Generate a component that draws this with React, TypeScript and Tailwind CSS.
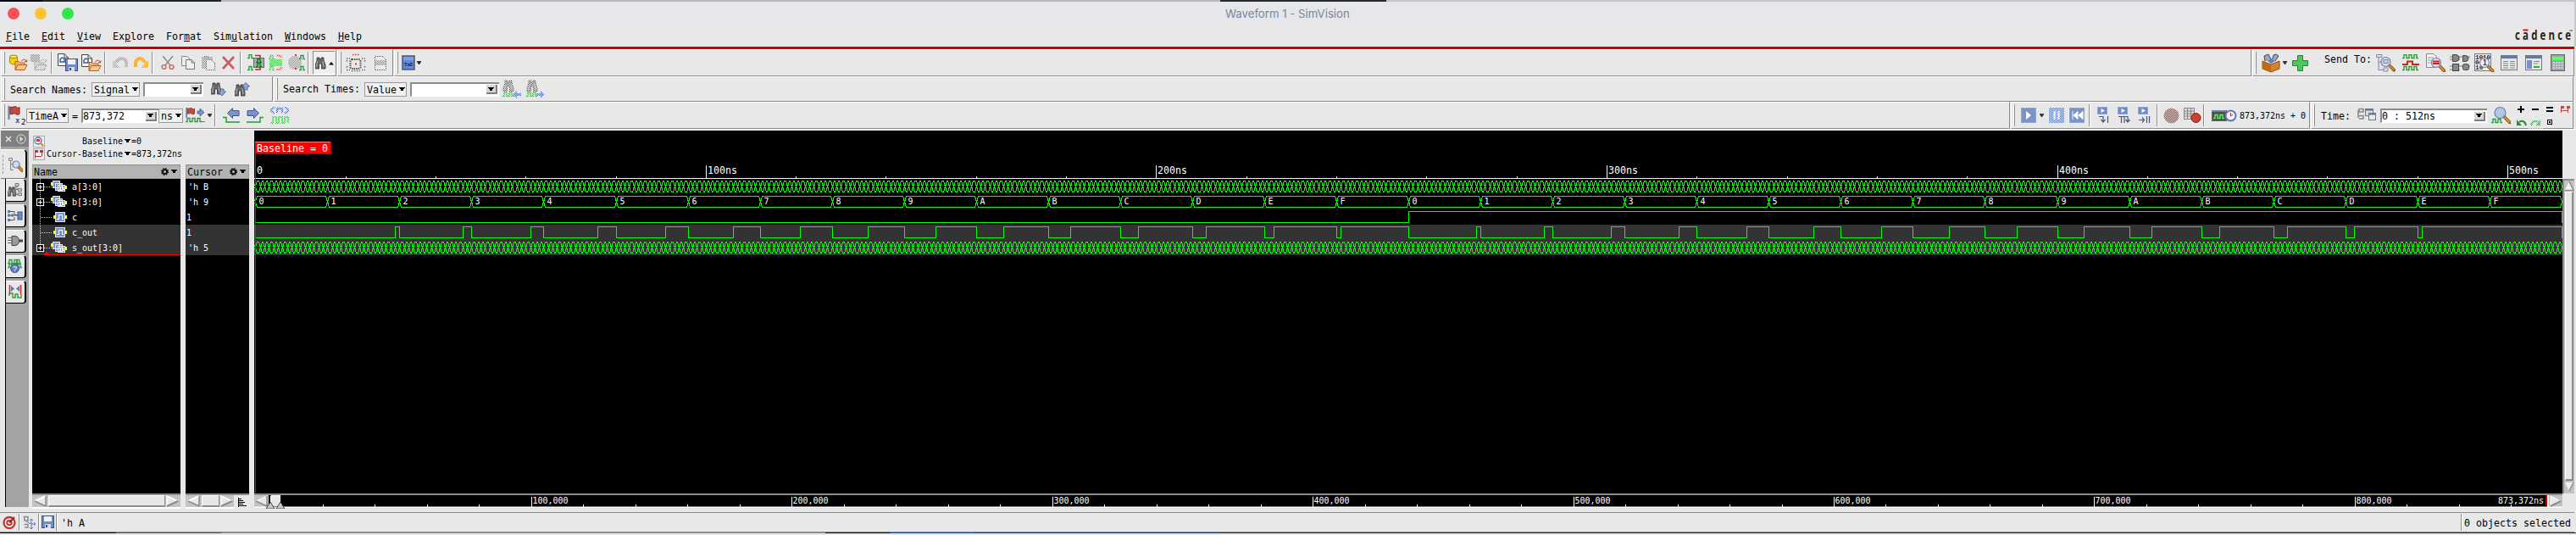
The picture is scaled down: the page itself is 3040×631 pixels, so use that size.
import React from "react";

const MONO = "font-['DejaVu_Sans_Mono','Liberation_Mono',monospace]";
const T7 = "pt-[2px] text-[11.63px] leading-[13px] whitespace-pre text-black";
const T7BOX = "text-[11.63px] leading-[13px] whitespace-pre text-black";
const T6 = "pt-px text-[9.97px] leading-[12px] whitespace-pre text-black";

type IconProps = { w: number; h: number; className?: string; dim?: boolean; children?: React.ReactNode };

function Icon({ w, h, className = "", dim, children }: IconProps) {
  return (
    <svg width={w} height={h} viewBox={`0 0 ${w} ${h}`} className={`shrink-0 block ${className}`}>
      {children}
      {dim && <rect width={w} height={h} fill="url(#chk)" shapeRendering="crispEdges" />}
    </svg>
  );
}

/* ---------- glyph fragments ---------- */
const Folder = ({ x = 0, y = 0 }: { x?: number; y?: number }) => (
  <g transform={`translate(${x} ${y})`}>
    <path d="M1 12V2.500H5L6.500 4H12V6" fill="#f3b36b" stroke="#b8601a" />
    <path d="M1 12.500L4 6.500H15L12 12.500Z" fill="#f9c88c" stroke="#b8601a" />
    <path d="M8 2.500C10 -0.500 13 -0.500 14 2M12 2.500L14.500 3L15 0.500" fill="none" stroke="#c03030" />
  </g>
);
const Page = () => (
  <g>
    <path d="M.500.500H8L12.500 5V14.500H.500Z" fill="#f4f4f4" stroke="#444" />
    <path d="M8 .500V5H12.500" fill="none" stroke="#444" />
    <path d="M3 10V7L5 5L8 6V10Z" fill="#fff" stroke="#3c5a96" strokeWidth="1.500" />
  </g>
);
const Floppy = ({ x = 0, y = 0 }: { x?: number; y?: number }) => (
  <g transform={`translate(${x} ${y})`}>
    <rect x=".5" y=".5" width="14" height="14" fill="#6f8cc8" stroke="#34508a" />
    <rect x="3" y="1" width="9" height="6" fill="#f2f2f2" />
    <rect x="4" y="10" width="7" height="5" fill="#dcdcdc" />
    <rect x="5" y="11" width="2" height="3" fill="#34508a" />
  </g>
);
const Bino = () => (
  <g>
    <path d="M2 1H5V3H7V1H10V4L12 10V14H7.500V8H4.500V14H0V10L2 4Z" fill="#6a6a6a" stroke="#333" strokeWidth=".8" />
    <path d="M2.500 5L1.500 12M9 5L10 12" stroke="#b5b5b5" />
  </g>
);
const Wave = ({ x = 0, y = 0, c = "#2f9a3c", n = 3 }: { x?: number; y?: number; c?: string; n?: number }) => {
  let d = `M0 4.500`;
  for (let i = 0; i < n; i++) d += `h2v-4h3v4h1`;
  d += "h1";
  return <path transform={`translate(${x} ${y})`} d={d} fill="none" stroke={c} strokeWidth="1.400" />;
};
const Lens = ({ x, y, r = 5.5, fill = "#c9dbf3" }: { x: number; y: number; r?: number; fill?: string }) => (
  <g>
    <path d={`M${x + r * 0.7} ${y + r * 0.7}L${x + r * 1.75} ${y + r * 1.75}`} stroke="#7a4a10" strokeWidth="3.600" strokeLinecap="round" />
    <path d={`M${x + r * 0.75} ${y + r * 0.75}L${x + r * 1.7} ${y + r * 1.7}`} stroke="#e0952c" strokeWidth="2" strokeLinecap="round" />
    <circle cx={x} cy={y} r={r} fill={fill} fillOpacity=".85" stroke="#6b7fa5" strokeWidth="1.200" />
  </g>
);
const Flag = () => (
  <g>
    <path d="M1.500 0V16" stroke="#6b86b8" strokeWidth="2.400" />
    <path d="M3 1C6 3 8 -1 10 1C12 3 13 2 14 1.500V9.500C12 11 10 10 9 9C7 8 5 10.500 3 9.500Z" fill="#c44a40" stroke="#7d2420" />
  </g>
);
const BlueArrow = ({ x, y, right }: { x: number; y: number; right?: boolean }) => (
  <path
    transform={right ? `translate(${x + 15} ${y}) scale(-1 1)` : `translate(${x} ${y})`}
    d="M.500 6.500L6.500.500V3.500H14V9.500H6.500V12.500Z" fill="#7b93c9" stroke="#3f568c"
  />
);
const Caret = ({ className = "" }: { className?: string }) => (
  <Icon w={7} h={4} className={className}><path d="M0 0H7L4.500 4H2.500Z" fill="#000" shapeRendering="crispEdges" /></Icon>
);
const SmallCaret = ({ className = "" }: { className?: string }) => (
  <Icon w={5} h={4} className={className}><path d="M0 0H5V1L3 4H2L0 1Z" fill="#333" /></Icon>
);

/* ---------- toolbar parts ---------- */
function Section({ className, children }: { className: string; children?: React.ReactNode }) {
  return (
    <section className={`flex shrink-0 items-center border-t border-l border-r border-b border-t-white border-l-white border-r-[#8c8c8c] border-b-[#8c8c8c] bg-[#e8e8e8] mr-px ${className}`}>
      {children}
    </section>
  );
}
const Grip = () => <div className="ml-[2px] h-[26px] w-[2px] shrink-0 border-l border-r border-l-white border-r-[#8c8c8c]" />;
const Sep = ({ className }: { className: string }) => (
  <div className={`h-[26px] w-[2px] shrink-0 border-l border-r border-l-[#8c8c8c] border-r-white ${className}`} />
);
const Drop = ({ label, className }: { label: string; className: string }) => (
  <div className={`flex h-[17px] shrink-0 items-center justify-between border border-[#999] bg-[#f0f0f0] pl-[2px] pr-px ${T7BOX} ${className}`}>
    <span className="pt-[2px]">{label}</span>
    <Caret className="mb-[2px]" />
  </div>
);
const Entry = ({ value, className }: { value: string; className: string }) => (
  <div className={`flex h-[17px] shrink-0 items-center justify-between border-t-2 border-l-2 border-b border-t-[#8c8c8c] border-l-[#8c8c8c] border-b-white bg-white pr-[2px] ${T7BOX} ${className}`}>
    <span className="pt-px">{value}</span>
    <span className="flex h-[11px] w-[13px] items-center justify-center border-r-2 border-b-2 border-[#7f7f7f] bg-[#d6d6d6]">
      <Caret />
    </span>
  </div>
);

/* ---------- waveform data ---------- */
const PX = 5.3155;
const X0 = 1.8;
const tx = (t: number) => Math.floor(X0 + t * PX) + 0.5;

function busPath(times: number[], top: number, bot: number) {
  let d = "";
  for (let i = 0; i < times.length - 1; i++) {
    const a = tx(times[i]);
    const b = tx(times[i + 1]);
    d += `M${a - 1} ${bot - 4}L${a + 1} ${top + 3}L${a + 2} ${top}H${b - 2}L${b - 1} ${top + 3}L${b + 1} ${bot - 4}`;
    d += `M${a - 1} ${top + 4}L${a + 1} ${bot - 3}L${a + 2} ${bot}H${b - 2}L${b - 1} ${bot - 3}L${b + 1} ${top + 4}`;
  }
  return d;
}
const nsTimes = Array.from({ length: 513 }, (_, i) => i);
const bTimes = Array.from({ length: 33 }, (_, i) => i * 16);

/* carry-out of a + b + c, with a counting every 1 ns and b every 16 ns */
function carryPath(hi: number, lo: number) {
  let d = `M${tx(0)} ${lo}`;
  for (let k = 0; k < 32; k++) {
    const need = 16 - (k % 16) - (k >= 16 ? 1 : 0);
    if (need > 0) d += `H${tx(k * 16)}V${lo}`;
    if (need > 0 && need < 16) d += `H${tx(k * 16 + need)}V${hi}`;
    d += `H${tx(k * 16 + 16)}`;
  }
  return d + `V${lo}`;
}

function WaveArea() {
  const hex = "0123456789ABCDEF";
  return (
    <svg width="2724" height="428" viewBox="0 0 2724 428" className={`block bg-black ${MONO}`}>
      <rect x="0" y="111" width="2724" height="36" fill="#333" />
      <g stroke="#f4f4f4" fill="none" shapeRendering="crispEdges">
        <path d="M0 56.500H2724" />
        <path d={Array.from({ length: 25 }, (_, i) => i + 1).map((i) => `M${tx(i * 20)} ${i % 5 ? 54 : 41}V56`).join("")} />
      </g>
      <g fill="#fff" fontSize="11.63">
        <text x="3" y="51">0</text>
        {[1, 2, 3, 4, 5].map((n) => <text key={n} x={tx(n * 100) + 1.5} y="51">{n}00ns</text>)}
      </g>
      <g stroke="#00ff00" fill="none" shapeRendering="crispEdges">
        <path d={busPath(nsTimes, 59.5, 72.5)} />
        <path d={busPath(bTimes, 77.5, 90.5)} />
        <path d={`M${tx(0)} 108.500H${tx(256)}V95.500H${tx(512)}V108.500`} />
        <path d={carryPath(113.5, 126.5)} />
        <path d={busPath(nsTimes, 131.5, 144.5)} />
      </g>
      <g fill="#fff" fontSize="9.97">
        {bTimes.slice(0, 32).map((t, i) => <text key={i} x={tx(t) + 4} y="87">{hex[i % 16]}</text>)}
      </g>
      <path d="M1.500 13V428" stroke="#f00" shapeRendering="crispEdges" />
      <rect x="1" y="13" width="90" height="15" fill="#f00" />
      <path d="M1 13.500H91" stroke="#ff8080" />
      <path d="M1 27.500H90.500V13" stroke="#a00" fill="none" />
      <text x="3" y="25" fill="#fff" fontSize="11.63">Baseline = 0</text>
    </svg>
  );
}

function TimeScroll() {
  const kx = (k: number) => Math.round(19.3 + k * 3.0745) + 0.5;
  return (
    <svg width="2724" height="18" viewBox="0 0 2724 18" className={`block ${MONO}`}>
      <rect width="2724" height="18" fill="#c3c3c3" />
      <rect x="17" y="2" width="2689" height="14" fill="#000" />
      <path d="M0 1H2724" stroke="#8c8c8c" strokeWidth="2" />
      <path d="M0 16.500H2724" stroke="#fff" strokeWidth="2" />
      <path d="M15 3V15L2 9Z" fill="#e8e8e8" /><path d="M15 3L2 9" stroke="#fff" /><path d="M2 9L15 15V3" stroke="#8c8c8c" fill="none" strokeWidth="1.500" />
      <path d="M2710 3V15L2722 9Z" fill="#e8e8e8" /><path d="M2722 9L2710 3V15" stroke="#fff" fill="none" /><path d="M2710 15L2722 9" stroke="#8c8c8c" strokeWidth="2" />
      <path d={Array.from({ length: 43 }, (_, i) => i + 1).map((i) => `M${kx(i * 20)} ${i % 5 ? 13 : 4}V16`).join("")} stroke="#fff" shapeRendering="crispEdges" />
      <g fill="#fff" fontSize="9.97">
        {[1, 2, 3, 4, 5, 6, 7, 8].map((n) => <text key={n} x={kx(n * 100) + 1} y="12">{n}00,000</text>)}
        <text x="2648" y="12">873,372ns</text>
      </g>
      <path d="M2705 2V16" stroke="#f00" strokeWidth="1.500" /><path d="M2707 2V16" stroke="#fff" strokeWidth="1.500" />
      <rect x="19" y="2" width="12" height="13" fill="#e8e8e8" />
      <path d="M19.500 15V3H31" stroke="#fff" fill="none" /><path d="M19 2.500h1" stroke="#f00" />
      <path d="M14 18L19 10L24 18ZM26 18L31 10L36 18Z" fill="#c8c8c8" stroke="#222" strokeWidth=".8" />
    </svg>
  );
}

/* ---------- signal rows ---------- */
function NameRow({ name, bus, last, dark }: { name: string; bus?: boolean; last?: boolean; dark?: boolean }) {
  return (
    <div className={`relative flex h-[18px] items-center ${dark ? "bg-[#333]" : ""}`}>
      <Icon w={42} h={18}>
        <path d={`M9.500 0V${last ? 9 : 18}M9.500 9.500H24`} stroke="#ccc" strokeDasharray="1 1" fill="none" shapeRendering="crispEdges" />
        {bus && (
          <g shapeRendering="crispEdges">
            <rect x="5.500" y="5.500" width="8" height="8" fill="#000" stroke="#fff" />
            <path d="M7 9.500H12M9.500 7V12" stroke="#fff" />
          </g>
        )}
        {bus ? (
          <g shapeRendering="crispEdges">
            <path d="M23 4V8M26 7V11M29 10V14M40 8V12" stroke="#ff0" strokeWidth="2" />
            <g fill="#7b93c9" stroke="#e6ebf6">
              <path d="M24.500 2.500h8v8h-8zM27.500 5.500h8v8h-8zM30.500 7.500h8v7h-8z" />
            </g>
            <path d="M32 12.500H33.500V9.500H36.500V12.500H38" stroke="#fff" fill="none" />
          </g>
        ) : (
          <g shapeRendering="crispEdges">
            <path d="M26 7V11M40 7V11" stroke="#ff0" strokeWidth="2" />
            <rect x="27.500" y="3.500" width="11" height="11" fill="#7b93c9" stroke="#dfe6f5" />
            <path d="M29 11.500H31.500V6.500H35.500V11.500H37" stroke="#fff" fill="none" />
          </g>
        )}
      </Icon>
      <span className="ml-[5px] pt-[2px] text-[9.97px] leading-[12px] text-white">{name}</span>
      {last && (
        <svg width="161" height="5" viewBox="0 0 161 5" className="absolute bottom-0 left-[14px]">
          <path d="M0 4.500H161" stroke="#f00" /><path d="M0 4L3 0.500L6 4Z" fill="#f00" />
        </svg>
      )}
    </div>
  );
}
const Gear = () => (
  <Icon w={9} h={9}>
    <circle cx="4.500" cy="4.500" r="2.600" fill="none" stroke="#111" strokeWidth="2" />
    <circle cx="4.500" cy="4.500" r="4" fill="none" stroke="#111" strokeWidth="1.200" strokeDasharray="1.600 1.540" />
  </Icon>
);
const ColHead = ({ label }: { label: string }) => (
  <div className="flex h-[17px] items-center border border-[#999] border-t-[#8c8c8c] bg-[#b3b3b3] pl-px pr-[3px]">
    <span className="flex-1 pt-[2px] text-[11.63px] leading-[13px] text-black">{label}</span>
    <Gear /><Caret className="ml-[3px] mb-px" />
  </div>
);

function HScroll({ thumb }: { thumb: string }) {
  return (
    <div className="flex h-[18px] items-center border-t-2 border-b-2 border-t-[#8c8c8c] border-b-white bg-[#c3c3c3]">
      <Icon w={17} h={14}><path d="M16 1V13L3 7Z" fill="#e8e8e8" /><path d="M16 1L3 7" stroke="#fff" strokeWidth="2" /><path d="M3 7L16 13V1" fill="none" stroke="#8c8c8c" strokeWidth="1.500" /></Icon>
      <div className={`h-[14px] ml-[2px] border border-white border-r-[#8c8c8c] border-b-2 border-b-[#8c8c8c] bg-[#e8e8e8] ${thumb}`} />
      <Icon w={16} h={14} className="ml-px"><path d="M1 1V13L14 7Z" fill="#e8e8e8" /><path d="M14 7L1 1V13" stroke="#fff" strokeWidth="1.500" fill="none" /><path d="M1 13L14 7" fill="none" stroke="#8c8c8c" strokeWidth="2" /></Icon>
    </div>
  );
}

const Tab = ({ children }: { children: React.ReactNode }) => (
  <div className="flex h-[27px] w-[24px] items-center justify-center rounded-tr-[4px] rounded-br-[4px] border-t border-r-2 border-b border-t-white border-r-black border-b-black bg-[#e8e8e8] mb-[3px] pb-[2px]">
    {children}
  </div>
);

function Sidebar() {
  return (
    <aside className="flex h-[444px] w-[33px] shrink-0 flex-col bg-[#a3a3a3]">
      <div className="flex h-[19px] items-center gap-[5px] bg-[#808080] pl-[5px]">
        <Icon w={8} h={8}><path d="M1 1L7 7M7 1L1 7" stroke="#e8e8e8" strokeWidth="1.400" /></Icon>
        <Icon w={12} h={12}><circle cx="6" cy="6" r="5.200" fill="none" stroke="#ddd" /><path d="M4.500 3L8.500 6L4.500 9Z" fill="#ddd" /></Icon>
      </div>
      <div className="mt-[3px] flex h-[35px] w-[31px] items-center rounded-tr-[5px] rounded-br-[4px] border-t border-r-2 border-b border-t-white border-r-black border-b-[#777] bg-[#e8e8e8] pl-[2px]">
        <div className="h-[22px] border-l border-dashed border-[#999]" />
        <Icon w={18} h={18} className="ml-[5px]">
          <path d="M1.500 1.500h4v3h-4zM3.500 5V15.500H7M3.500 8.500H6" fill="#ddd" stroke="#888" />
          <Lens x={10} y={9} r={4} />
        </Icon>
      </div>
      <div className="flex flex-1">
        <div className="w-[6px] border-r border-black bg-[#e8e8e8]" />
        <div className="flex flex-col">
          <Tab><Icon w={18} h={18}><path d="M9 1.500h4v3h-4zM11 5V8M12.500 7.500h4v3h-4zM12.500 12.500h4v3h-4zM9 8.500H12M9 5V14.500H12" fill="#ccc" stroke="#777" /><g transform="translate(0 5) scale(.8)"><Bino /></g></Icon></Tab>
          <Tab><Icon w={18} h={16}><path d="M2 3.500H8V7.500H12M2 8H12M2 13.500H8V10" fill="none" stroke="#555" /><path d="M0 2h3v3H0zM0 6.500h3v3H0zM0 12h3v3H0zM4 6.500h3v3H4z" fill="#5a77b8" /><rect x="12" y="4" width="5" height="9" fill="#6d88c4" stroke="#3f568c" /></Icon></Tab>
          <Tab><Icon w={18} h={14}><path d="M0 3.500H6M0 9.500H6M0 6.500H5" stroke="#666" /><path d="M5 1.500H9C15 1.500 15 12.500 9 12.500H5Z" fill="#999" stroke="#444" /><path d="M14 7H18" stroke="#444" strokeWidth="3" /></Icon></Tab>
          <Tab><Icon w={18} h={18}><Wave x={0} y={1} n={2} /><Wave x={0} y={6} n={2} /><Wave x={9} y={1} n={1} /><Wave x={10} y={6} n={1} /><circle cx="8.500" cy="11.500" r="5" fill="#5f80c0" stroke="#34508a" /><text x="6" y="15" fontSize="9" fill="#fff" className="font-['Liberation_Sans',sans-serif]">?</text></Icon></Tab>
          <Tab><Icon w={16} h={18}><path d="M1.500 1V12M14.500 1V12" stroke="#d22" strokeWidth="1.500" /><path d="M3 2L7 5.500L3 9ZM13 2L9 5.500L13 9Z" fill="#5f78b4" /><path d="M1 14V11H5V16H8V12H11V16H15V12" fill="none" stroke="#2f9a3c" strokeWidth="1.400" /></Icon></Tab>
        </div>
      </div>
    </aside>
  );
}

const Menu = ({ pre = "", u, post }: { pre?: string; u: string; post: string }) => (
  <span>{pre}<u className="underline-offset-[1px]">{u}</u>{post}</span>
);

const StepIcon = ({ d }: { d: string }) => (
  <g>
    <rect x="2.500" y=".5" width="11" height="8" fill="#6f8cc8" stroke="#8ea4d2" />
    <path d="M6.500 2L11 4.500L6.500 7Z" fill="#fff" />
    <path d={d} stroke="#3f568c" fill="none" strokeWidth="1.200" />
  </g>
);

export default function App() {
  return (
    <div className={`flex h-[631px] w-[3040px] flex-col overflow-hidden bg-[#e8e8e8] ${MONO}`}>
      <svg width="0" height="0" className="absolute">
        <defs>
          <pattern id="chk" width="2" height="2" patternUnits="userSpaceOnUse">
            <rect width="1" height="1" fill="#e8e8e8" /><rect x="1" y="1" width="1" height="1" fill="#e8e8e8" />
          </pattern>
        </defs>
      </svg>

      <div className="flex h-[2px] shrink-0">
        <div className="w-[50px] bg-[#000814]" /><div className="w-[211px] bg-[#20242c]" /><div className="w-[1179px] bg-[#b9bab9]" />
        <div className="w-[196px] bg-[#26262e]" /><div className="flex-1 bg-[#c4c6c1]" />
      </div>

      <header className="flex h-[26px] shrink-0 items-center border-r-2 border-[#c8c8c8] bg-[#e5e7eb]">
        <div className="ml-[9px] mt-[2px] flex gap-[18px]">
          <div className="size-[14px] rounded-full bg-[#f75058]" />
          <div className="size-[14px] rounded-full bg-[#fcc230]" />
          <div className="size-[14px] rounded-full bg-[#32e848]" />
        </div>
        <div className="ml-[1359px] mt-[2px] text-[13.2px] leading-[16px] whitespace-pre text-[#7d8598] font-['Inter',sans-serif]">Waveform 1 - SimVision</div>
      </header>

      <nav className="flex h-[27px] shrink-0 justify-between border-r-2 border-[#c8c8c8] bg-[#e8e8e8]">
        <div className={`ml-[7px] mt-[7px] flex gap-[14px] ${T7}`}>
          <Menu u="F" post="ile" /><Menu u="E" post="dit" /><Menu u="V" post="iew" /><Menu pre="Ex" u="p" post="lore" />
          <Menu pre="For" u="m" post="at" /><Menu pre="Sim" u="u" post="lation" /><Menu u="W" post="indows" /><Menu u="H" post="elp" />
        </div>
        <svg width="70" height="24" viewBox="0 0 70 24" className="block">
          <g transform="scale(.74 1)">
            <text x="0" y="19" fontSize="15.500" fontWeight="700" fill="#222" letterSpacing="4.300" className="font-['Open_Sans',sans-serif]">cadence</text>
          </g>
          <path d="M9.500 7.500H15.500" stroke="#e01010" strokeWidth="2" />
          <path d="M64.500 8H68" stroke="#444" />
        </svg>
      </nav>
      <div className="mr-[2px] h-[3px] shrink-0 bg-[#cc0000]" />

      {/* toolbar row 1 */}
      <div className="flex h-[32px] shrink-0 pl-px">
        <Section className="w-[396px]">
          <Grip />
          <Icon w={22} h={20} className="ml-[5px]"><ellipse cx="5" cy="3" rx="4.500" ry="2" fill="#ffe84a" stroke="#a88600" /><path d="M.500 3V10C2 12.500 8 12.500 9.500 10V3C8 5.500 2 5.500 .500 3Z" fill="#f5d400" stroke="#a88600" /><Folder x={6} y={6} /></Icon>
          <Icon w={21} h={20} className="ml-[3px]" dim><rect width="11" height="9" fill="#30d040" /><Folder x={4} y={6} /></Icon>
          <Sep className="ml-[3px]" />
          <Icon w={25} h={22} className="ml-[6px]"><Page /><Floppy x={9} y={6} /></Icon>
          <Icon w={24} h={21} className="ml-[3px]"><Page /><Folder x={8} y={7} /></Icon>
          <Sep className="ml-[3px]" />
          <Icon w={18} h={14} className="ml-[8px]" dim><path d="M16 12C18 1 8 -1 4 7" stroke="#e08a10" strokeWidth="4" fill="none" /><path d="M0 4V13H9Z" fill="#f0a020" /></Icon>
          <Icon w={17} h={14} className="ml-[7px]" dim><path d="M2 12C0 1 10 -1 13 7" stroke="#e08a10" strokeWidth="4" fill="none" /><path d="M17 4V13H8Z" fill="#f0a020" /></Icon>
          <Sep className="ml-[4px]" />
          <Icon w={16} h={17} className="ml-[9px]"><path d="M2 0L11 11M14 0L5 11" stroke="#888" strokeWidth="1.400" /><circle cx="3.500" cy="13" r="2.400" fill="none" stroke="#d06060" strokeWidth="1.400" /><circle cx="12.500" cy="13" r="2.400" fill="none" stroke="#d06060" strokeWidth="1.400" /></Icon>
          <Icon w={17} h={17} className="ml-[8px]"><path d="M.500.500H7L9.500 3V11.500H.500Z" fill="#eee" stroke="#888" /><path d="M5.500 4.500H12L15.500 8V15.500H5.500Z" fill="#f0f0f0" stroke="#777" /><path d="M12 4.500V8H15.500" fill="none" stroke="#777" /></Icon>
          <Icon w={17} h={17} className="ml-[7px]" dim><rect y="1" width="13" height="14" fill="#d8842a" /><rect x="3" width="6" height="3" fill="#777" /><path d="M5.500 4.500H12L15.500 8V16.500H5.500Z" fill="#eee" stroke="#555" /></Icon>
          <Icon w={17} h={16} className="ml-[6px]"><path d="M2 1L15 15M15 1L2 15" stroke="#c23c3c" strokeWidth="2.600" opacity=".8" /></Icon>
          <Sep className="ml-[5px]" />
          <Icon w={21} h={20} className="ml-[7px]"><Wave x={0} y={0} n={1} /><Wave x={0} y={14} n={1} /><path d="M9 1.500H15V4M9 18H15V15" stroke="#c22" fill="none" strokeWidth="1.600" /><rect x="7.500" y="4.500" width="12" height="11" fill="#a8b0a8" stroke="#666" /><Wave x={10} y={5} n={1} c="#0a7a1a" /><Wave x={10} y={10} n={1} c="#0a7a1a" /></Icon>
          <Icon w={18} h={20} className="ml-[4px]" dim><Wave x={0} y={1} n={1} /><path d="M9 1.500H13L16 4M9 18H13L16 15" stroke="#c22" fill="none" strokeWidth="1.600" /><rect x="1" y="6" width="15" height="8" fill="#4fc85a" /><Wave x={0} y={14} n={1} /></Icon>
          <Icon w={21} h={20} className="ml-[5px]"><circle cx="8" cy="10" r="8" fill="#999" /><rect width="17" height="20" fill="url(#chk)" /><Wave x={13} y={1} n={1} /><Wave x={13} y={14} n={1} /><path d="M8 1h2M8 17h2" stroke="#d33" strokeWidth="2" /></Icon>
          <Sep className="ml-[2px]" />
          <div className="ml-[4px] flex h-[28px] w-[26px] shrink-0 items-center border-t border-l border-b border-t-[#8c8c8c] border-l-[#8c8c8c] border-b-white bg-[#efefef] pl-[2px]">
            <Icon w={13} h={15}><Bino /></Icon>
            <Icon w={6} h={4} className="ml-[3px] mt-[2px]"><path d="M0 3.500L3 0L6 3.500Z" fill="#000" /></Icon>
          </div>
        </Section>
        <Section className="w-[66px]">
          <Grip />
          <Icon w={24} h={22} className="ml-[5px]"><g fill="none" strokeDasharray="1.500 1.500" strokeWidth="1.600"><path d="M8 1.500H17" stroke="#d33" /><path d="M1 6H5M19 6H23M1 19.500H5M19 19.500H23M1.500 8V11M1.500 15V18M22.500 8V11M22.500 15V18M7 20.500H17" stroke="#666" /></g><rect x="5.500" y="7" width="12" height="11" rx="2" fill="none" stroke="#555" strokeWidth="2" strokeDasharray="1.500 1" /><rect x="11" y="11.500" width="2" height="2" fill="#d33" /></Icon>
          <Icon w={14} h={17} className="ml-[10px]" dim><path d="M.500.500H10L13.500 4V16.500H.500Z" fill="#eee" stroke="#555" /><rect x="1" y="5" width="12" height="6" fill="#7a94cc" /></Icon>
        </Section>
        <Section className="w-[2192px]">
          <Grip />
          <Icon w={17} h={18} className="ml-[4px]"><rect x="1" y="1" width="14" height="16" fill="#5f88e0" stroke="#5a5a66" strokeWidth="1.600" /><path d="M2 2H14V6H2Z" fill="#79a0ee" /><text x="3" y="13" fontSize="6" fontWeight="700" fill="#223" textLength="10.500" className="font-['Liberation_Sans',sans-serif]">TxE</text></Icon>
          <SmallCaret className="ml-px" />
        </Section>
        <Section className="w-[380px]">
          <Grip />
          <Icon w={22} h={23} className="ml-[6px]"><path d="M4 9L3 3L8 1L12 9M12 9L14 2L17 1L20 3L16 9" fill="#9aa8bc" stroke="#445" /><path d="M1 9L11 13L21 9V18L11 22L1 18Z" fill="#d9822b" stroke="#8a4a10" /><path d="M1 9L11 13V22L1 18Z" fill="#c06a18" /><path d="M7 9L11 6L16 9L11 12Z" fill="#5f80c0" /></Icon>
          <SmallCaret className="ml-[3px]" />
          <Icon w={19} h={19} className="ml-[6px]"><path d="M6.500.500H12.500V6.500H18.500V12.500H12.500V18.500H6.500V12.500H.500V6.500H6.500Z" fill="#4fc85a" stroke="#1f8a2c" /></Icon>
          <span className={`ml-[19px] mb-[9px] shrink-0 ${T7}`}>Send To:</span>
          <Icon w={23} h={22} className="ml-[5px]"><path d="M.500 1.500H7V4.500H.500ZM3 5V19.500H9M3 10H8M9 17h5v4h-5z" fill="#dde" stroke="#889" /><Lens x={11.5} y={10} r={5.5} /><rect x="9" y="7.500" width="5" height="4" fill="#ccd" stroke="#889" /></Icon>
          <Icon w={21} h={20} className="ml-[8px]"><Wave x={0} y={0} n={3} /><path d="M0 12H6V8.500H12V12H20" fill="none" stroke="#c22" strokeWidth="2" /><Wave x={0} y={14} n={3} /></Icon>
          <Icon w={23} h={22} className="ml-[7px]"><path d="M.500.500H9L12.500 4V16.500H.500Z" fill="#f2f2f2" stroke="#888" /><path d="M2 5H9M2 8H9M2 11H9" stroke="#999" /><Lens x={12} y={11} r={5.5} fill="#f0d8e0" /><path d="M8 9.500H16M8 12H16" stroke="#d02030" strokeWidth="1.800" /></Icon>
          <Icon w={25} h={20} className="ml-[5px]"><path d="M0 3H24M0 6H12M0 14H24M0 18H12" stroke="#777" /><g fill="#888" stroke="#444"><path d="M3.500.500H7Q11 .5 11 4.500Q11 8.500 7 8.500H3.500ZM15.500 1.500H18Q22 1.500 22 5Q22 8.500 18 8.500H15.500Z" /><rect x="3.500" y="11.500" width="7" height="8" /><rect x="15.500" y="11.500" width="7" height="7" rx="2" /></g></Icon>
          <Icon w={24} h={22} className="ml-[4px]"><rect x=".5" y=".5" width="19" height="20" fill="#f2f2f2" stroke="#777" /><g className="font-['Liberation_Mono',monospace]" fontSize="8" fontWeight="700" fill="#222"><text x="1" y="7" textLength="18">1010</text><text x="1" y="13">0</text><text x="1" y="19">10</text></g><Lens x={12} y={11} r={5.5} fill="#e6eefa" /><text x="10" y="14" fontSize="8" fontWeight="700" fill="#333">1</text></Icon>
          <Icon w={21} h={18} className="ml-[7px]"><rect x=".5" y=".5" width="19" height="17" fill="#e6e6e6" stroke="#777" /><rect x="1" y="1" width="18" height="3" fill="#6878a0" /><path d="M3 7.500H9M3 10H9M3 12.500H9M3 15H9M11 7.500H17M11 10H17M11 12.500H17M11 15H17" stroke="#888" /></Icon>
          <Icon w={21} h={18} className="ml-[8px]"><rect x=".5" y=".5" width="19" height="17" fill="#e6e6e6" stroke="#777" /><rect x="1" y="1" width="18" height="3" fill="#6878a0" /><rect x="2" y="6" width="6" height="10" fill="#7a90c8" /><path d="M10 7.500H17M10 10H15" stroke="#888" /><path d="M10 14H17" stroke="#2fae3c" strokeWidth="2" /></Icon>
          <Icon w={18} h={20} className="ml-[9px]"><rect x=".5" y=".5" width="16" height="19" fill="#9aa4ac" stroke="#666" /><rect x="2" y="3" width="13" height="4" fill="#5cff5c" /><path d="M3 10H15M3 13H15M3 16H15" stroke="#e4e8ec" strokeWidth="1.600" strokeDasharray="2 1.200" /></Icon>
        </Section>
      </div>

      {/* toolbar row 2 */}
      <div className="flex h-[30px] shrink-0 pl-px">
        <Section className="w-[321px]">
          <Grip />
          <span className={`ml-[6px] shrink-0 ${T7}`}>Search Names:</span>
          <Drop label="Signal" className="ml-[5px] mt-px w-[57px]" />
          <Entry value="" className="ml-[4px] w-[71px]" />
          <Icon w={19} h={17} className="ml-[9px]"><Bino /><path d="M11 8H15V11H17.500L13 16L8.500 11H11Z" fill="#8fa9dc" stroke="#3f568c" strokeWidth=".8" /></Icon>
          <Icon w={19} h={17} className="ml-[9px]"><g transform="translate(0 2)"><Bino /></g><path d="M11 9H15V5H17.500L13 .5L8.500 5H11Z" fill="#8fa9dc" stroke="#3f568c" strokeWidth=".8" /></Icon>
        </Section>
        <Section className="w-[2714px]">
          <Grip />
          <span className={`ml-[6px] mb-[2px] shrink-0 ${T7}`}>Search Times:</span>
          <Drop label="Value" className="ml-[5px] mt-px w-[50px]" />
          <Entry value="" className="ml-[4px] w-[105px]" />
          <Icon w={23} h={22} className="ml-[4px]" dim><g transform="translate(1 0)"><Bino /></g><Wave x={0} y={15} n={2} c="#1a9a1a" /><path d="M12 17.500L17 13V16H22V19H17V22Z" fill="#3f62b4" /></Icon>
          <Icon w={23} h={22} className="ml-[5px]" dim><g transform="translate(1 0)"><Bino /></g><Wave x={0} y={15} n={2} c="#1a9a1a" /><path d="M22 17.500L17 13V16H12V19H17V22Z" fill="#3f62b4" /></Icon>
        </Section>
      </div>

      {/* toolbar row 3 */}
      <div className="flex h-[32px] shrink-0 pl-px">
        <Section className="w-[2371px]">
          <Grip />
          <Icon w={22} h={28} className="ml-[3px]"><g transform="translate(0 3)"><Flag /></g><text x="9" y="23" fontSize="9" fontWeight="700" fill="#3f568c">x</text><text x="16" y="25" fontSize="9" fill="#000">2</text></Icon>
          <Drop label="TimeA" className="mt-px w-[50px]" />
          <span className={`ml-[4px] shrink-0 ${T7}`}>=</span>
          <Entry value="873,372" className="ml-[4px] mt-px w-[91px]" />
          <Drop label="ns" className="mt-px w-[29px]" />
          <Icon w={23} h={18} className="ml-[3px]"><g transform="scale(.75)"><Flag /></g><path d="M14 4H17V1L22 5.500L17 10V7H14Z" fill="#7b93c9" stroke="#3f568c" strokeWidth=".8" /><Wave x={0} y={12} n={3} /><path d="M19 16.500h4" stroke="#2f9a3c" /></Icon>
          <SmallCaret className="ml-[3px]" />
          <Sep className="ml-[3px]" />
          <Icon w={21} h={18} className="ml-[8px]"><path d="M0 11.500H4V17H20" stroke="#1f9a2c" strokeWidth="1.400" fill="none" /><BlueArrow x={5} y={0} /></Icon>
          <Icon w={21} h={18} className="ml-[7px]"><path d="M0 17H16V11.500H20" stroke="#1f9a2c" strokeWidth="1.400" fill="none" /><BlueArrow x={0} y={0} right /></Icon>
          <Icon w={22} h={20} className="ml-[7px]" dim><path d="M5 0L0 4L5 8M17 0L22 4L17 8" stroke="#3f62b4" strokeWidth="2" fill="none" /><path d="M8 7V2H14V7" stroke="#3f62b4" strokeWidth="2.400" fill="none" /><path d="M0 19H3V12H7V19H10V12H14V19H17V12H21V19" stroke="#1fae2c" strokeWidth="1.600" fill="none" /></Icon>
        </Section>
        <Section className="w-[353px]">
          <Grip />
          <Icon w={18} h={18} className="ml-[7px]"><rect x=".5" y=".5" width="17" height="17" fill="#7b93c9" stroke="#8ea4d2" /><path d="M6 4V14L12 9Z" fill="#fff" /></Icon>
          <SmallCaret className="ml-[4px]" />
          <Icon w={18} h={18} className="ml-[6px]" dim><rect width="18" height="18" fill="#5f7cc0" /><path d="M6.500 4V14M11.500 4V14" stroke="#fff" strokeWidth="2" /></Icon>
          <Icon w={18} h={18} className="ml-[6px]"><rect x=".5" y=".5" width="17" height="17" fill="#7b93c9" stroke="#8ea4d2" /><path d="M4 4V14M10 4.500V13.500L5 9ZM16 4.500V13.500L11 9Z" fill="#fff" stroke="#fff" /></Icon>
          <Sep className="ml-[5px]" />
          <Icon w={19} h={20} className="ml-[6px]"><StepIcon d="M4 11.500H9V17M6.500 15L9 18L11.500 15M14.500 11V19" /></Icon>
          <Icon w={19} h={20} className="ml-[5px]"><StepIcon d="M3 11.500H14V17M11.500 15L14 18L16.500 15M6.500 12V19M10 12V19" /></Icon>
          <Icon w={19} h={20} className="ml-[5px]"><StepIcon d="M3 15.500H9M7 12.500L9.500 15.500L7 18.500M12.500 11V19M15.500 11V19" /></Icon>
          <Sep className="ml-[5px]" />
          <Icon w={19} h={19} className="ml-[6px]"><circle cx="9.500" cy="9.500" r="9" fill="#d03a3a" /><rect width="19" height="19" fill="url(#chk)" opacity=".8" /></Icon>
          <Icon w={21} h={18} className="ml-[5px]"><rect x=".5" y=".5" width="12" height="13" fill="#ddd" stroke="#888" /><path d="M1 4H12M1 7H12M1 10H12M4.500 1V13M8.500 1V13" stroke="#888" /><circle cx="14.500" cy="12" r="5.500" fill="#d0402c" stroke="#8a1c10" /></Icon>
          <Sep className="ml-[2px]" />
          <Icon w={30} h={15} className="ml-[8px]"><rect x=".5" y="1.500" width="17" height="12" fill="#4a4f4a" stroke="#666" /><rect x="0" y="1" width="17" height="2" fill="#6f80ae" /><Wave x={2} y={6} n={2} c="#50ff50" /><circle cx="22.500" cy="7.500" r="6" fill="#eef2fa" stroke="#5f78b4" strokeWidth="2" /><path d="M22.500 4V8L25 6" fill="none" stroke="#a33" /></Icon>
          <span className={`ml-[3px] shrink-0 ${T6}`}>873,372ns + 0</span>
        </Section>
        <Section className="w-[310px]">
          <Grip />
          <span className={`ml-[7px] shrink-0 ${T7}`}>Time:</span>
          <Icon w={22} h={16} className="ml-[8px] mb-[3px]"><path d="M2 1.500H7V5H2ZM2 9.500H7V13H2M1 3V12" fill="none" stroke="#888" strokeWidth="1.600" /><rect x="9.500" y="1.500" width="9" height="8" fill="#ddd" stroke="#777" /><rect x="13.500" y="6.500" width="8" height="8" fill="#e8e8e8" stroke="#777" /><path d="M10 2.500h9M14 7.500h8" stroke="#6878a0" strokeWidth="2" /></Icon>
          <Entry value="0 : 512ns" className="ml-[5px] mt-px w-[126px]" />
          <Icon w={23} h={22} className="ml-[5px]"><Lens x={10.5} y={8} r={6.500} fill="#a9bfe8" /><Wave x={0} y={15} n={2} /></Icon>
          <div className="ml-[4px] mt-px grid grid-cols-4 grid-rows-2">
            <Icon w={17} h={15}><path d="M4 7H12M8 3V11" stroke="#000" strokeWidth="2" /></Icon>
            <Icon w={17} h={15}><path d="M4 7H12" stroke="#000" strokeWidth="2" /></Icon>
            <Icon w={17} h={15}><path d="M4 5H12M4 9H12" stroke="#000" strokeWidth="2" /></Icon>
            <Icon w={17} h={15}><path d="M4.500 3V11M5 8.500H12M12.500 3V11" stroke="#b44" fill="none" /><path d="M4 3h4v3h-4zM11 3h4v3h-4z" fill="#c44a40" /></Icon>
            <Icon w={17} h={15}><path d="M14 11C13 5 8 5 6 7" stroke="#2f8a3c" strokeWidth="2" fill="none" /><path d="M3 4V11H9Z" fill="#2f8a3c" /></Icon>
            <Icon w={17} h={15} dim><path d="M3 11C4 5 9 5 11 7" stroke="#2f8a3c" strokeWidth="2" fill="none" /><path d="M14 4V11H8Z" fill="#2f8a3c" /></Icon>
            <Icon w={17} h={15}><rect x="5.500" y="4.500" width="5" height="5" fill="none" stroke="#000" /><rect x="7" y="6" width="2" height="2" /></Icon>
          </div>
        </Section>
      </div>

      {/* main */}
      <div className="flex h-[448px] shrink-0 border-t border-white pt-px pl-px">
        <Sidebar />
        <div className="ml-[4px] flex w-[256px] shrink-0 flex-col">
          <div className="flex h-[40px] flex-col pt-[5px]">
            <div className="flex h-[15px] items-center">
              <Icon w={14} h={14} className="ml-px"><rect x=".5" y=".5" width="13" height="13" fill="#eee" stroke="#aaa" /><circle cx="6" cy="6" r="4" fill="#e8f0fa" stroke="#5f78b4" strokeWidth="1.400" /><rect x="4" y="4" width="4" height="3" fill="#d33" /><path d="M9 9L12 12" stroke="#c8842a" strokeWidth="2" /></Icon>
              <span className={`ml-[44px] ${T6}`}>Baseline</span><Caret className="ml-[2px] mb-px" /><span className={`ml-px ${T6}`}>=0</span>
            </div>
            <div className="flex h-[15px] items-center">
              <Icon w={14} h={14} className="ml-px"><rect x=".5" y=".5" width="13" height="13" fill="#eee" stroke="#aaa" /><path d="M2.500 2V12M10.500 2V9M3 9.500H10" stroke="#b33" /><path d="M2 2h4v3h-4zM8 2h4v3h-4z" fill="#c33" /></Icon>
              <span className={`ml-[2px] ${T6}`}>Cursor-Baseline</span><Caret className="ml-[2px] mb-px" /><span className={`ml-px ${T6}`}>=873,372ns</span>
            </div>
          </div>
          <div className="flex flex-1 gap-[6px]">
            <div className="flex w-[175px] flex-col">
              <ColHead label="Name" />
              <div className="flex-1 bg-black">
                <NameRow name="a[3:0]" bus /><NameRow name="b[3:0]" bus /><NameRow name="c" /><NameRow name="c_out" dark /><NameRow name="s_out[3:0]" bus dark last />
              </div>
              <HScroll thumb="w-[138px]" />
            </div>
            <div className="flex w-[75px] flex-col">
              <ColHead label="Cursor" />
              <div className="flex-1 bg-black text-[9.97px] leading-[18px] text-white">
                {["'h B", "'h 9", "1", "1", "'h 5"].map((v, i) => (
                  <div key={i} className={`h-[18px] pt-px whitespace-pre ${v === "1" ? "pl-px" : "pl-[3px]"} ${i > 2 ? "bg-[#333]" : ""}`}>{v}</div>
                ))}
              </div>
              <div className="flex">
                <div className="w-[57px]"><HScroll thumb="w-[21px]" /></div>
                <Icon w={18} h={18}><path d="M0 1H18" stroke="#8c8c8c" strokeWidth="2" /><path d="M5.500 5V16M6 6.500H9M6 8.500H11M6 10.500H13M6 12.500H11M6 14.500H15" stroke="#000" /></Icon>
              </div>
            </div>
          </div>
        </div>
        <div className="ml-[6px] flex w-[2724px] shrink-0 flex-col">
          <WaveArea />
          <TimeScroll />
        </div>
        <div className="flex w-[14px] shrink-0 flex-col bg-[#e8e8e8]">
          <div className="mt-[57px] h-[371px] border-t-2 border-l-2 border-[#8c8c8c] bg-[#c3c3c3]">
            <Icon w={12} h={13}><path d="M6 1L11 11H1Z" fill="#f4f4f4" /><path d="M1 11.500H11L6 1" fill="none" stroke="#8c8c8c" strokeWidth="1.500" /></Icon>
            <div className="ml-px h-[341px] w-[10px] border border-white border-r-2 border-b-2 border-r-[#8c8c8c] border-b-[#8c8c8c] bg-[#e8e8e8]" />
            <Icon w={12} h={13}><path d="M1 2H11L6 12Z" fill="#f0f0f0" /><path d="M11 2L6 12" fill="none" stroke="#8c8c8c" strokeWidth="1.500" /></Icon>
          </div>
        </div>
      </div>

      {/* status bar */}
      <footer className="mr-[2px] mt-[4px] flex h-[24px] shrink-0 items-center border-t border-b border-t-[#8c8c8c] border-b-[#8c8c8c] bg-[#e8e8e8] pl-[3px]">
        <Icon w={18} h={18}><circle cx="8" cy="9.500" r="6.500" fill="#fff" stroke="#c03a30" strokeWidth="2.400" /><circle cx="8" cy="9.500" r="2.800" fill="#fff" stroke="#c03a30" strokeWidth="2" /><path d="M8 9.500L14 3" stroke="#833" strokeWidth="2" /></Icon>
        <Sep className="ml-px !h-[20px]" />
        <Icon w={17} h={18} className="ml-[3px]"><path d="M1.500 2.500H6V7H2ZM1.500 11.500H6V15H2" stroke="#888" fill="none" strokeWidth="1.500" /><path d="M4 8L10 11L14 11M10 6V16M13 9L15 11L13 13M8 7L10 5L12 7M8 15L10 17L12 15" stroke="#5f78b4" fill="none" /></Icon>
        <Sep className="ml-px !h-[20px]" />
        <Icon w={17} h={16} className="ml-px"><Floppy x={1} y={0} /></Icon>
        <Sep className="ml-px !h-[20px]" />
        <span className={`ml-[4px] flex-1 ${T7}`}>'h A</span>
        <Sep className="!h-[20px]" />
        <span className={`ml-[2px] mr-[4px] ${T7}`}>0 objects selected</span>
      </footer>
      <div className="flex h-px shrink-0">
        <div className="w-[137px] bg-[#05070a]" /><div className="w-[124px] bg-[#55585a]" /><div className="w-[713px] bg-[#8c908b]" /><div className="w-[76px] bg-[#0a0f1c]" />
        <div className="w-[100px] bg-[#1c4a9a]" /><div className="w-[290px] bg-[#1a3a5c]" /><div className="flex-1 bg-[#2a2e33]" />
      </div>
    </div>
  );
}
